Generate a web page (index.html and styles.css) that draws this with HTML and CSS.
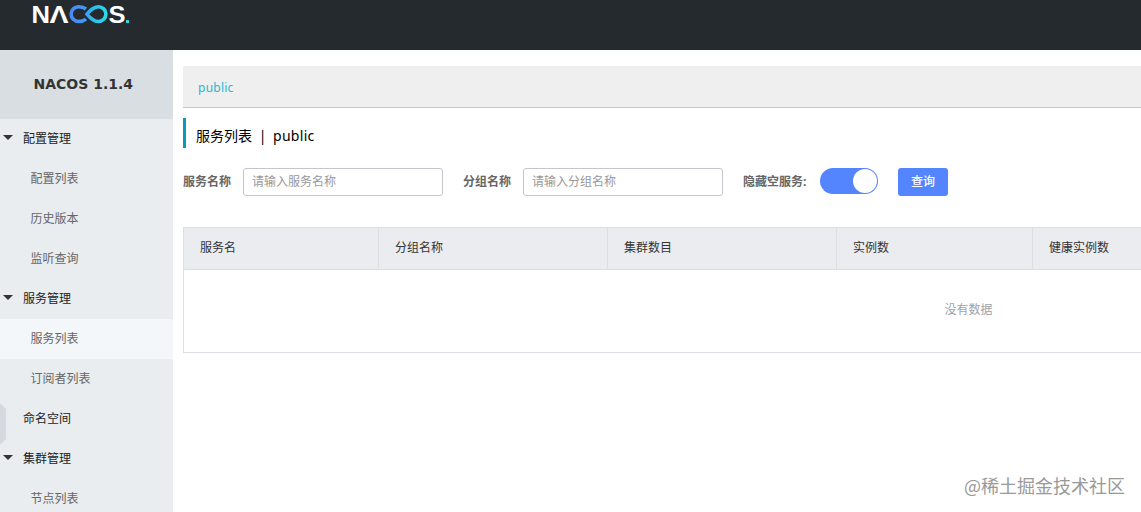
FILE: index.html
```html
<!DOCTYPE html>
<html lang="zh-CN">
<head>
<meta charset="utf-8">
<title>Nacos</title>
<link rel="stylesheet" href="styles.css">
</head>
<body>
<header class="topbar">
  <svg class="logo" width="100" height="32" viewBox="0 0 100 32">
    <defs>
      <linearGradient id="loop" gradientUnits="userSpaceOnUse" x1="37" y1="0" x2="76" y2="0">
        <stop offset="0" stop-color="#4d86f0"/>
        <stop offset=".45" stop-color="#3e9cf6"/>
        <stop offset=".6" stop-color="#2bbbe8"/>
        <stop offset="1" stop-color="#2fdde6"/>
      </linearGradient>
    </defs>
    <text class="logo-text" x="-0.5" y="22.8" textLength="18.500" lengthAdjust="spacingAndGlyphs">N</text>
    <text class="logo-text" x="17.500" y="22.8" textLength="19" lengthAdjust="spacingAndGlyphs">Λ</text>
    <path d="M54 9C51.500 7 49 6.700 46.500 6.700a7.400 7.400 0 0 0 0 14.800c2.500 0 5-.3 7.500-2.300" fill="none" stroke="url(#loop)" stroke-width="3.600"/>
    <path d="M54.800 14.100C58.500 10 61.500 6.700 66.500 6.700a7.400 7.400 0 0 1 0 14.800C61.500 21.500 58.500 18.200 54.800 14.100Z" fill="none" stroke="url(#loop)" stroke-width="3.600" stroke-linejoin="round"/>
    <text class="logo-text" x="76.500" y="22.800" textLength="17" lengthAdjust="spacingAndGlyphs">S</text>
    <rect x="94" y="20" width="3" height="3" rx=".6" fill="#2fdde6"/>
  </svg>
</header>
<div class="layout">
  <aside class="sidebar">
    <h1 class="version">NACOS 1.1.4</h1>
    <nav class="menu">
      <a class="item group">配置管理</a>
      <a class="item child">配置列表</a>
      <a class="item child">历史版本</a>
      <a class="item child">监听查询</a>
      <a class="item group">服务管理</a>
      <a class="item child active">服务列表</a>
      <a class="item child">订阅者列表</a>
      <a class="item plain">命名空间</a>
      <a class="item group">集群管理</a>
      <a class="item child">节点列表</a>
    </nav>
    <svg class="handle" width="6" height="42" viewBox="0 0 6 42"><path d="M0 0L6 6V36L0 42Z" fill="#d6dae0"/></svg>
  </aside>
  <main class="content">
    <div class="namespace">public</div>
    <h2 class="title"><span>服务列表</span><span class="sep">|</span><span class="name">public</span></h2>
    <form class="search">
      <label class="label">服务名称</label>
      <div class="input">请输入服务名称</div>
      <label class="label">分组名称</label>
      <div class="input">请输入分组名称</div>
      <label class="label wide">隐藏空服务:</label>
      <div class="switch"><span class="knob"></span></div>
      <div class="button">查询</div>
    </form>
    <section class="table">
      <div class="row head">
        <div>服务名</div><div>分组名称</div><div>集群数目</div><div>实例数</div><div>健康实例数</div>
      </div>
      <div class="empty">没有数据</div>
    </section>
  </main>
</div>
<div class="watermark">@稀土掘金技术社区</div>
</body>
</html>
```
FILE: styles.css
```css
* { box-sizing: border-box; }
body {
  margin: 0;
  height: 512px;
  overflow: hidden;
  background: #fff;
  font: 12px/20px "Open Sans", "Noto Sans CJK SC", sans-serif;
  color: #333;
}
.topbar { height: 50px; padding-left: 32px; background: #252a2f; }
.logo { display: block; overflow: visible; }
.logo-text { font: bold 24.5px "Liberation Sans", sans-serif; fill: #fff; }
.layout { display: flex; height: 462px; }
.sidebar {
  position: relative;
  flex: 0 0 173px;
  background: #e9edf0;
  overflow: hidden;
}
.version {
  height: 69px;
  margin: 0;
  padding-left: 33.5px;
  background: #d8dee2;
  font: bold 14px/69px "DejaVu Sans", sans-serif;
  white-space: nowrap;
}
.menu { display: flex; flex-direction: column; }
.item { height: 40px; line-height: 39px; color: #666; }
.group, .plain { padding-left: 23px; color: #222; }
.child { padding-left: 30.5px; }
.active { background: #f4f7f9; }
.group { display: flex; padding-left: 3px; }
.group::before {
  content: "";
  width: 10px;
  height: 5px;
  margin: 16px 10px 0 0;
  background: #333;
  clip-path: polygon(0 0, 100% 0, 50% 100%);
}
.handle { position: absolute; left: 0; top: 353px; }
.content { flex: 1; min-width: 0; padding: 16px 0 0 10px; overflow: hidden; }
.namespace {
  height: 42px;
  padding-left: 15px;
  border-bottom: 1px solid #c7c7c7;
  background: #efefef;
  color: #26b8d2;
  font: 12px/43px "Noto Sans", sans-serif;
  letter-spacing: .25px;
}
.title {
  display: flex;
  height: 30px;
  margin: 10px 0 20px;
  padding-left: 10px;
  border-left: 3px solid #0a9abf;
  color: #000;
  font: 14px/35px "Noto Sans", "Noto Sans CJK SC", sans-serif;
}
.sep { width: 21px; text-align: center; }
.name { letter-spacing: .3px; }
.search { display: flex; height: 28px; margin: 0 0 31px; }
.label { margin-right: 12px; color: #666; font-weight: 700; line-height: 27px; white-space: nowrap; }
.wide { width: 65px; }
.input {
  width: 200px;
  height: 28px;
  margin-right: 20px;
  padding-left: 8px;
  border: 1px solid #c4c6cf;
  border-radius: 3px;
  color: #999;
  line-height: 25px;
}
.switch {
  display: flex;
  justify-content: flex-end;
  width: 58px;
  height: 26px;
  margin-right: 20px;
  padding: 1px;
  border-radius: 13px;
  background: #5584ff;
}
.knob { width: 24px; height: 24px; border-radius: 50%; background: #fff; }
.button {
  width: 50px;
  height: 28px;
  border-radius: 3px;
  background: #5584ff;
  color: #fff;
  font-weight: 500;
  line-height: 27px;
  text-align: center;
}
.table { width: 1571px; height: 126px; border: 1px solid #dcdee3; }
.row {
  display: grid;
  grid-template-columns: 195px 229px 229px 196px 1fr;
  height: 42px;
  border-bottom: 1px solid #dcdee3;
  background: #ebecf0;
}
.row div { padding-left: 16px; border-right: 1px solid #dcdee3; line-height: 39px; }
.empty { color: #a0a2a8; line-height: 79px; text-align: center; }
.watermark {
  position: absolute;
  right: 16px;
  bottom: 14px;
  color: #999;
  font: 18px/26px "Noto Sans CJK SC", sans-serif;
}
```
